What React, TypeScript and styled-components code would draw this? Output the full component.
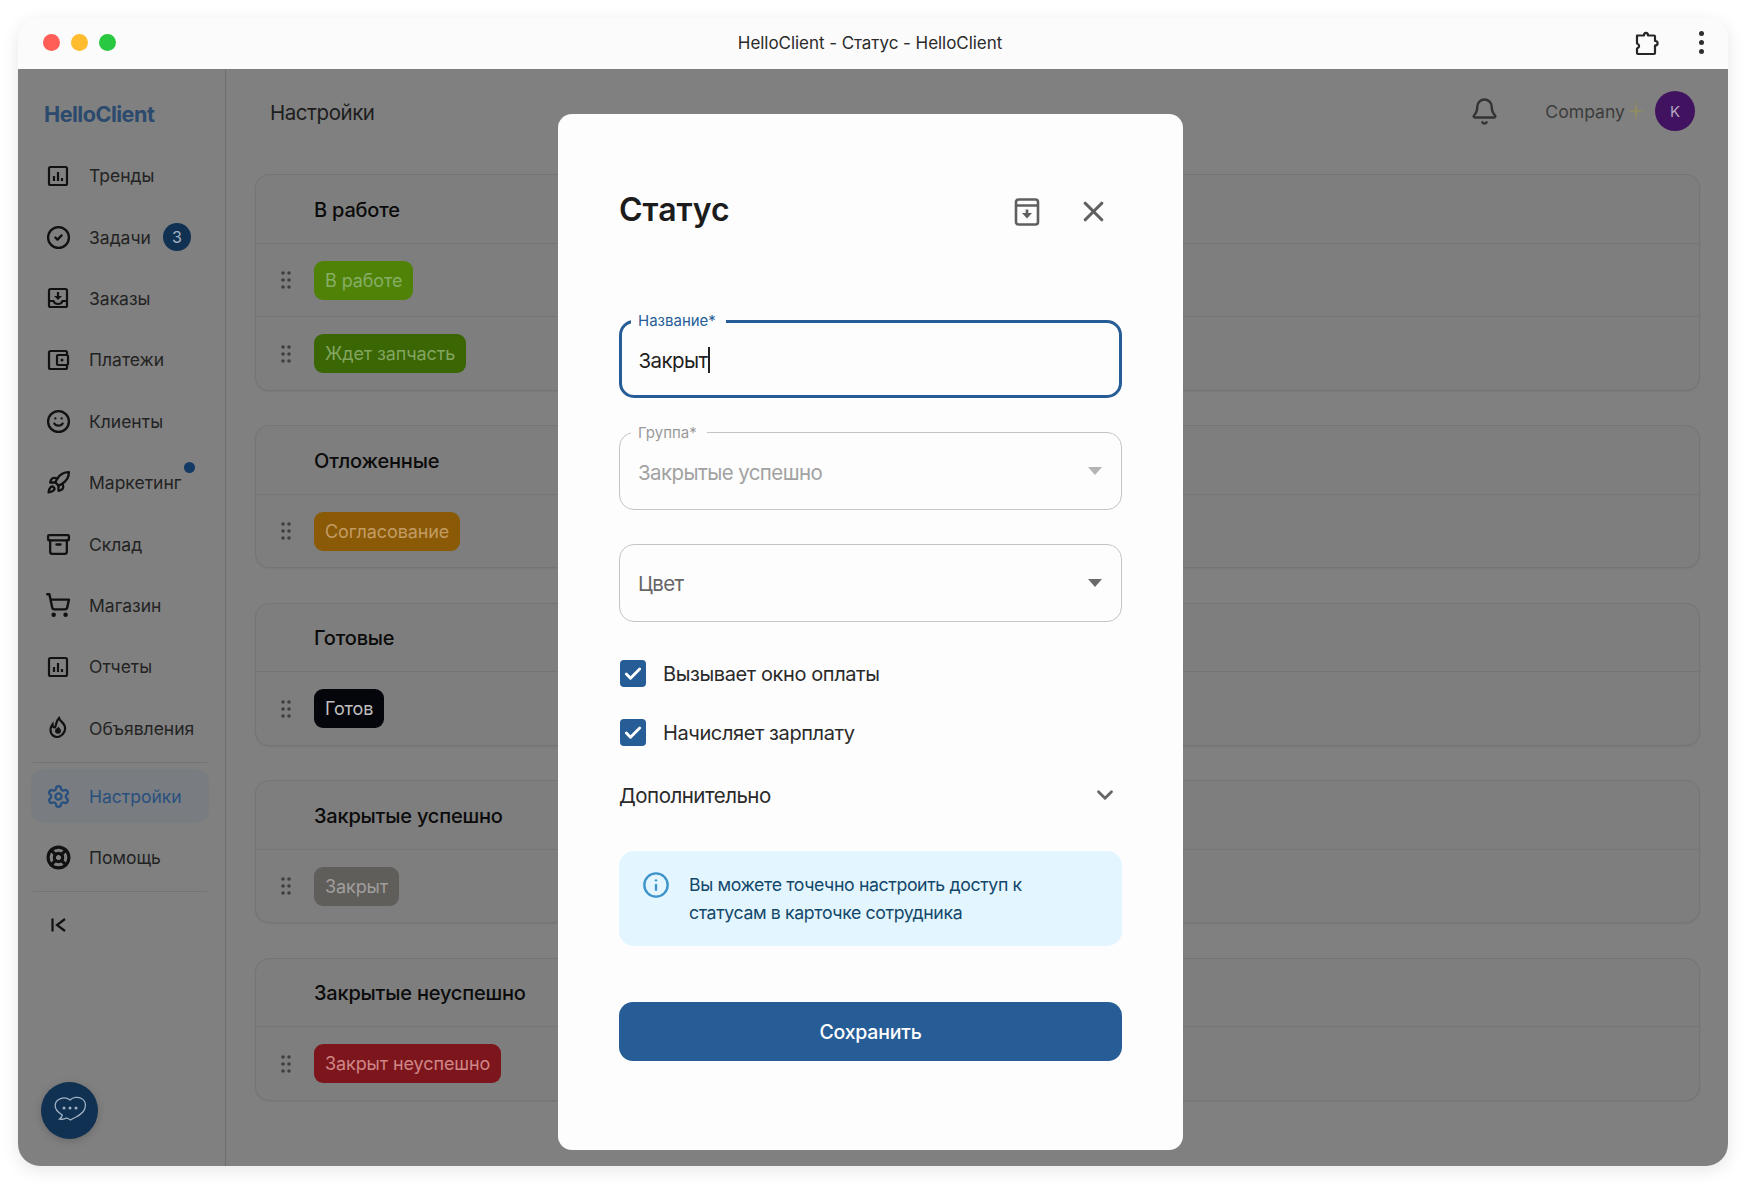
import React from 'react';
import styled, { createGlobalStyle } from 'styled-components';
import {
  Archive,
  Bell,
  Check,
  ChevronDown,
  CircleCheck,
  Info,
  LifeBuoy,
  Rocket,
  Settings,
  ShoppingCart,
  Smile,
  X,
} from 'lucide-react';

const GlobalStyle = createGlobalStyle`
  html, body {
    margin: 0;
    background: #ffffff;
    font-family: Inter, "Noto Sans", sans-serif;
  }
  * { box-sizing: border-box; }
`;

const Page = styled.div`
  width: 1750px;
  height: 1188px;
  padding: 18px 22px 22px 18px;
  overflow: hidden;
`;

const Window = styled.div`
  height: 100%;
  display: flex;
  flex-direction: column;
  border-radius: 22px;
  overflow: hidden;
  box-shadow: 0 4px 18px rgba(0, 0, 0, 0.1);
`;

const TitleBar = styled.div`
  height: 51px;
  flex: none;
  display: grid;
  grid-template-columns: 1fr auto 1fr;
  align-items: center;
  padding: 0 24px 2px 25px;
  background: #fbfbfb;
`;

const Lights = styled.div`
  display: flex;
  gap: 11px;
`;

const Light = styled.span<{ $color: string }>`
  width: 17px;
  height: 17px;
  border-radius: 50%;
  background: ${(p) => p.$color};
`;

const WindowTitle = styled.div`
  margin-right: 7px;
  font-size: 17px;
  color: #2a2a2a;
  letter-spacing: -0.05px;
`;

const WindowActions = styled.div`
  display: flex;
  justify-content: flex-end;
  align-items: center;
  gap: 40px;
`;

const KebabDots = styled.div`
  display: flex;
  flex-direction: column;
  gap: 4px;
  span {
    width: 5px;
    height: 5px;
    border-radius: 50%;
    background: #2f2f2f;
  }
`;

const Body = styled.div`
  flex: 1;
  display: flex;
  position: relative;
  background: #808080;
  min-height: 0;
`;

const Sidebar = styled.aside`
  width: 208px;
  flex: none;
  position: relative;
  border-right: 1px solid #6e6e6e;
  padding: 0 16px 0 13px;
`;

const Logo = styled.div`
  height: 76px;
  display: flex;
  align-items: center;
  padding: 14px 0 0 13px;
  font-size: 21.6px;
  font-weight: 700;
  letter-spacing: -0.5px;
  color: #2c4a6e;
`;

const NavItem = styled.div<{ $active?: boolean }>`
  height: ${(p) => (p.$active ? '54px' : '61.4px')};
  margin-bottom: ${(p) => (p.$active ? '3px' : '0')};
  display: flex;
  align-items: center;
  gap: 18px;
  padding-left: 14px;
  position: relative;
  font-size: 17.5px;
  color: ${(p) => (p.$active ? '#28507f' : '#232323')};
  background: ${(p) => (p.$active ? '#797c80' : 'transparent')};
  border-radius: ${(p) => (p.$active ? '14px' : '0')};
`;

const NavIcon = styled.span<{ $active?: boolean }>`
  width: 26px;
  flex: none;
  display: flex;
  justify-content: center;
  color: ${(p) => (p.$active ? '#28507f' : '#111111')};
`;

const CountBadge = styled.span`
  width: 28px;
  height: 28px;
  margin-left: -6px;
  border-radius: 50%;
  display: flex;
  align-items: center;
  justify-content: center;
  font-size: 16px;
  background: #103152;
  color: #a8b4c4;
`;

const NewDot = styled.span`
  position: absolute;
  top: 10px;
  left: 153px;
  width: 11px;
  height: 11px;
  border-radius: 50%;
  background: #123a64;
`;

const SideDivider = styled.div<{ $after?: boolean }>`
  height: 1px;
  margin: 3px 2px ${(p) => (p.$after ? '3px' : '6.5px')} 2px;
  background: #737373;
`;

const CollapseRow = styled.div`
  height: 60px;
  display: flex;
  align-items: center;
  padding-left: 19px;
  color: #111111;
`;

const ChatButton = styled.div`
  position: absolute;
  left: 23px;
  bottom: 27px;
  width: 57px;
  height: 57px;
  border-radius: 50%;
  display: flex;
  align-items: center;
  justify-content: center;
  background: #103152;
  box-shadow: 0 2px 8px rgba(0, 0, 0, 0.18);
`;

const Main = styled.main`
  flex: 1;
  min-width: 0;
  padding: 0 28px 0 29px;
`;

const Header = styled.header`
  height: 105px;
  display: flex;
  align-items: flex-start;
  justify-content: space-between;
  padding: 22px 5px 0 15px;
`;

const PageTitle = styled.h1`
  margin: 0;
  padding-top: 8.5px;
  font-size: 20.5px;
  font-weight: 400;
  letter-spacing: -0.45px;
  color: #1d1d1d;
`;

const HeaderRight = styled.div`
  display: flex;
  align-items: center;
  color: #333333;
`;

const CompanyName = styled.span`
  margin-left: 46px;
  font-size: 17.6px;
  color: #3c3c3c;
`;

const Avatar = styled.span`
  width: 40px;
  height: 40px;
  margin-left: 8px;
  border-radius: 50%;
  display: flex;
  align-items: center;
  justify-content: center;
  font-size: 15px;
  background: #40125f;
  color: #b5a5c2;
`;

const GroupList = styled.div`
  display: flex;
  flex-direction: column;
  gap: 34.5px;
`;

const Group = styled.section`
  border: 1px solid #757575;
  border-radius: 14px;
  background: #7e7e7e;
  box-shadow: 0 1px 2px rgba(0, 0, 0, 0.06);
`;

const GroupTitle = styled.h2`
  margin: 0;
  height: 67.5px;
  display: flex;
  align-items: center;
  padding: 2px 0 0 58px;
  font-size: 20px;
  font-weight: 500;
  color: #0b0b0b;
  letter-spacing: -0.2px;
`;

const StatusRow = styled.div`
  height: 73.5px;
  display: flex;
  align-items: center;
  gap: 23px;
  padding: 1px 0 0 25px;
  border-top: 1px solid #757575;
`;

const Chip = styled.span<{ $bg: string; $fg: string }>`
  height: 39px;
  display: inline-flex;
  align-items: center;
  padding: 0 11px;
  border-radius: 9px;
  font-size: 18px;
  letter-spacing: -0.1px;
  background: ${(p) => p.$bg};
  color: ${(p) => p.$fg};
`;

const Backdrop = styled.div`
  position: absolute;
  inset: 0;
  display: flex;
  justify-content: center;
  align-items: flex-start;
  padding: 45px 5px 0 0;
`;

const Modal = styled.div`
  width: 625px;
  height: 1036px;
  padding: 0 61px 0 61px;
  border-radius: 14px;
  background: #fdfdfd;
`;

const ModalHeader = styled.div`
  height: 206px;
  display: flex;
  align-items: flex-start;
  padding-top: 75px;
  color: #5f5f5f;
`;

const ModalTitle = styled.h2`
  margin: 0;
  flex: 1;
  font-size: 32px;
  line-height: 42px;
  font-weight: 600;
  color: #1c1c1c;
`;

const HeaderIcons = styled.div`
  display: flex;
  align-items: center;
  gap: 36px;
  padding: 6px 12px 0 0;
`;

const Fields = styled.div`
  display: flex;
  flex-direction: column;
  gap: 34px;
`;

const Field = styled.div<{ $focused?: boolean }>`
  height: 78px;
  position: relative;
  display: flex;
  align-items: center;
  justify-content: space-between;
  padding: 0 19px 0 ${(p) => (p.$focused ? '16.5px' : '18px')};
  border: ${(p) => (p.$focused ? '3px solid #275d96' : '1.5px solid #c4c4c4')};
  border-radius: 15px;
`;

const FieldLabel = styled.span<{ $focused?: boolean }>`
  position: absolute;
  top: ${(p) => (p.$focused ? '-12px' : '-10.5px')};
  left: ${(p) => (p.$focused ? '9px' : '11px')};
  padding: 0 10px 0 7px;
  font-size: 15px;
  line-height: 20px;
  background: #fdfdfd;
  color: ${(p) => (p.$focused ? '#275d96' : '#9a9a9a')};
`;

const FieldValue = styled.span<{ $tone: string; $nudge?: boolean }>`
  padding-top: ${(p) => (p.$nudge ? '2px' : '0')};
  font-size: 20.5px;
  color: ${(p) => p.$tone};
  letter-spacing: -0.6px;
`;

const Caret = styled.span`
  display: inline-block;
  width: 1.5px;
  height: 26px;
  margin-left: 1px;
  vertical-align: -5px;
  background: #222222;
`;

const SelectArrow = styled.span<{ $tone: string }>`
  width: 0;
  height: 0;
  border-left: 7px solid transparent;
  border-right: 7px solid transparent;
  border-top: 8px solid ${(p) => p.$tone};
`;

const CheckRows = styled.div`
  margin-top: 38px;
  display: flex;
  flex-direction: column;
  gap: 32px;
`;

const CheckRow = styled.label`
  display: flex;
  align-items: center;
  gap: 17px;
  height: 27px;
  padding-left: 1px;
  font-size: 20px;
  color: #2a2a2a;
  letter-spacing: -0.4px;
`;

const CheckBox = styled.span`
  width: 26px;
  height: 27px;
  border-radius: 4px;
  display: flex;
  align-items: center;
  justify-content: center;
  background: #275d96;
  color: #ffffff;
`;

const MoreRow = styled.div`
  margin-top: 34px;
  height: 30px;
  display: flex;
  align-items: center;
  justify-content: space-between;
  padding-right: 4px;
  font-size: 20.5px;
  color: #2a2a2a;
  letter-spacing: -0.5px;
`;

const Notice = styled.div`
  margin-top: 41px;
  height: 95px;
  display: flex;
  gap: 19px;
  padding: 20px 24px 0 23px;
  border-radius: 15px;
  background: #e3f5fe;
  color: #12476a;
  font-size: 17.7px;
  line-height: 28px;
  letter-spacing: -0.37px;
  svg {
    flex: none;
    color: #3a93cb;
  }
`;

const SaveButton = styled.button`
  width: 100%;
  height: 59px;
  margin-top: 56px;
  border: 0;
  border-radius: 14px;
  background: #275d96;
  color: #ffffff;
  font-family: inherit;
  font-size: 19.5px;
  font-weight: 500;
  letter-spacing: -0.2px;
`;

type IconProps = { size?: number };

const ChartIcon = ({ size = 24 }: IconProps) => (
  <svg width={size} height={size} viewBox="0 0 24 24" fill="none" stroke="currentColor" strokeWidth="2.2">
    <rect x="3" y="3" width="18" height="18" rx="1.5" />
    <path d="M8 17v-5M12 17V8M16 17v-3" />
  </svg>
);

const InboxIcon = ({ size = 24 }: IconProps) => (
  <svg width={size} height={size} viewBox="0 0 24 24" fill="none" stroke="currentColor" strokeWidth="2.2">
    <rect x="3" y="3" width="18" height="18" rx="1.5" />
    <path d="M3 15h4.5c.6 2 2.4 3 4.5 3s3.9-1 4.5-3H21" />
    <path d="M12 6v6" />
    <path d="M8 10h8l-4 4z" fill="currentColor" stroke="none" />
  </svg>
);

const WalletIcon = ({ size = 24 }: IconProps) => (
  <svg width={size} height={size} viewBox="0 0 24 24" fill="none" stroke="currentColor" strokeWidth="2.2">
    <path d="M21 6V4.500A1.500 1.500 0 0 0 19.500 3h-15A1.500 1.500 0 0 0 3 4.500v15A1.500 1.500 0 0 0 4.500 21h15a1.500 1.500 0 0 0 1.500-1.500V18" />
    <rect x="11" y="7" width="11" height="10" rx="1" />
    <circle cx="16" cy="12" r="1.500" fill="currentColor" stroke="none" />
  </svg>
);

const FlameIcon = ({ size = 24 }: IconProps) => (
  <svg width={size} height={size} viewBox="0 0 24 24" fill="none" stroke="currentColor" strokeWidth="2.2">
    <path d="M13 2c.8 3 4 4 5.500 7.500 1.600 4-.3 9-5 11-4.500 1.700-9-1.500-9-6.500 0-2.200.9-4 2-5.500 0 2 1 3 2.500 3C10.500 8.500 10 5 13 2z" />
    <path d="M12.500 10.500c.3 1.500 2.500 2.200 2.500 4.300a3 3 0 0 1-6 0c0-2 2.500-2.500 3.500-4.300z" fill="currentColor" stroke="none" />
  </svg>
);

const CollapseIcon = () => (
  <svg width="18" height="18" viewBox="0 0 18 18" fill="none" stroke="currentColor" strokeWidth="2.2">
    <path d="M2.500 2.500v13M15 3L7 9l8 6" />
  </svg>
);

const PuzzleIcon = () => (
  <svg width="26" height="26" viewBox="0 0 26 26" fill="none" stroke="#262626" strokeWidth="2.2" strokeLinejoin="round">
    <path d="M4 5.500h7c0-3.500 4-3.500 4 0h6c.6 0 1 .4 1 1V11c3.500 0 3.500 4.500 0 4.500V23c0 .6-.4 1-1 1H5c-.6 0-1-.4-1-1v-4.500c2.800-1 2.800-4 0-5z" />
  </svg>
);

const ArchiveDownIcon = () => (
  <svg width="28" height="28" viewBox="0 0 28 28" fill="none" stroke="currentColor" strokeWidth="2.6">
    <rect x="3" y="1.500" width="22" height="25" rx="2.500" />
    <path d="M3 7.500h22" />
    <path d="M14 11.500v5" />
    <path d="M9 15h10l-5 5.500z" fill="currentColor" stroke="none" />
  </svg>
);

const ChatIcon = () => (
  <svg width="36" height="34" viewBox="0 0 36 34" fill="none" stroke="#9fb0c4" strokeWidth="1.3">
    <path d="M18 6c3-3 8-3.500 11.500-1.500 3.500 2 4.500 6 3.500 9.500-1.200 4.500-5 7-9 9-2 1-4 2-5.500 3-1.500-1-2.500-1.500-4-2-1.500 1-4.500 1.500-7 1 1.500-1 2.500-2.500 2.800-4C6 18.500 3 15 3.200 11 3.500 5 12.500 1.500 18 6z" />
    <circle cx="12" cy="14" r="1.500" fill="#9fb0c4" stroke="none" />
    <circle cx="18" cy="14" r="1.500" fill="#9fb0c4" stroke="none" />
    <circle cx="24" cy="14" r="1.500" fill="#9fb0c4" stroke="none" />
  </svg>
);

const GripIcon = () => (
  <svg width="10" height="18" viewBox="0 0 10 18" fill="#3f3f3f">
    {[2, 9, 16].flatMap((y) => [2, 8].map((x) => <circle key={`${x}-${y}`} cx={x} cy={y} r="1.8" />))}
  </svg>
);

const SparkIcon = () => (
  <svg width="22" height="26" viewBox="0 0 20 26" fill="#8f8c62">
    <path d="M10 2l1.200 9.800 8 1.200-8 1.200L10 24l-1.200-9.800-8-1.200 8-1.200z" />
  </svg>
);

const topNav = [
  { label: 'Тренды', icon: <ChartIcon /> },
  { label: 'Задачи', icon: <CircleCheck size={25} strokeWidth={2.2} />, count: 3 },
  { label: 'Заказы', icon: <InboxIcon /> },
  { label: 'Платежи', icon: <WalletIcon /> },
  { label: 'Клиенты', icon: <Smile size={25} strokeWidth={2.2} /> },
  { label: 'Маркетинг', icon: <Rocket size={25} strokeWidth={2.2} />, dot: true },
  { label: 'Склад', icon: <Archive size={25} strokeWidth={2.2} /> },
  { label: 'Магазин', icon: <ShoppingCart size={26} strokeWidth={2.2} /> },
  { label: 'Отчеты', icon: <ChartIcon /> },
  { label: 'Объявления', icon: <FlameIcon /> },
];

const groups = [
  {
    title: 'В работе',
    chips: [
      { text: 'В работе', bg: '#4f8206', fg: '#86ae66' },
      { text: 'Ждет запчасть', bg: '#3a6603', fg: '#82a560' },
    ],
  },
  { title: 'Отложенные', chips: [{ text: 'Согласование', bg: '#8a5a06', fg: '#c39c64' }] },
  { title: 'Готовые', chips: [{ text: 'Готов', bg: '#05050c', fg: '#c0c0c0' }] },
  { title: 'Закрытые успешно', chips: [{ text: 'Закрыт', bg: '#605e5b', fg: '#a09e9c' }] },
  { title: 'Закрытые неуспешно', chips: [{ text: 'Закрыт неуспешно', bg: '#7d161c', fg: '#cf8686' }] },
];

const App: React.FC = () => {
  return (
    <Page>
      <GlobalStyle />
      <Window>
        <TitleBar>
          <Lights>
            <Light $color="#ff5f57" />
            <Light $color="#febc2e" />
            <Light $color="#28c840" />
          </Lights>
          <WindowTitle>HelloClient - Статус - HelloClient</WindowTitle>
          <WindowActions>
            <PuzzleIcon />
            <KebabDots>
              <span />
              <span />
              <span />
            </KebabDots>
          </WindowActions>
        </TitleBar>

        <Body>
          <Sidebar>
            <Logo>HelloClient</Logo>
            {topNav.map((item) => (
              <NavItem key={item.label}>
                <NavIcon>{item.icon}</NavIcon>
                {item.label}
                {item.count && <CountBadge>{item.count}</CountBadge>}
                {item.dot && <NewDot />}
              </NavItem>
            ))}
            <SideDivider />
            <NavItem $active>
              <NavIcon $active>
                <Settings size={25} strokeWidth={2.2} />
              </NavIcon>
              Настройки
            </NavItem>
            <NavItem>
              <NavIcon>
                <LifeBuoy size={25} strokeWidth={3} />
              </NavIcon>
              Помощь
            </NavItem>
            <SideDivider $after />
            <CollapseRow>
              <CollapseIcon />
            </CollapseRow>
            <ChatButton>
              <ChatIcon />
            </ChatButton>
          </Sidebar>

          <Main>
            <Header>
              <PageTitle>Настройки</PageTitle>
              <HeaderRight>
                <Bell size={29} strokeWidth={2} />
                <CompanyName>Company</CompanyName>
                <SparkIcon />
                <Avatar>K</Avatar>
              </HeaderRight>
            </Header>
            <GroupList>
              {groups.map((group) => (
                <Group key={group.title}>
                  <GroupTitle>{group.title}</GroupTitle>
                  {group.chips.map((chip) => (
                    <StatusRow key={chip.text}>
                      <GripIcon />
                      <Chip $bg={chip.bg} $fg={chip.fg}>
                        {chip.text}
                      </Chip>
                    </StatusRow>
                  ))}
                </Group>
              ))}
            </GroupList>
          </Main>

          <Backdrop>
            <Modal>
              <ModalHeader>
                <ModalTitle>Статус</ModalTitle>
                <HeaderIcons>
                  <ArchiveDownIcon />
                  <X size={33} strokeWidth={2.3} />
                </HeaderIcons>
              </ModalHeader>

              <Fields>
                <Field $focused>
                  <FieldLabel $focused>Название*</FieldLabel>
                  <FieldValue $tone="#1f1f1f" $nudge>
                    Закрыт
                    <Caret />
                  </FieldValue>
                </Field>
                <Field>
                  <FieldLabel>Группа*</FieldLabel>
                  <FieldValue $tone="#a2a2a2" $nudge>
                    Закрытые успешно
                  </FieldValue>
                  <SelectArrow $tone="#b4b4b4" />
                </Field>
                <Field>
                  <FieldValue $tone="#666666">Цвет</FieldValue>
                  <SelectArrow $tone="#6a6a6a" />
                </Field>
              </Fields>

              <CheckRows>
                <CheckRow>
                  <CheckBox>
                    <Check size={20} strokeWidth={3.4} />
                  </CheckBox>
                  Вызывает окно оплаты
                </CheckRow>
                <CheckRow>
                  <CheckBox>
                    <Check size={20} strokeWidth={3.4} />
                  </CheckBox>
                  Начисляет зарплату
                </CheckRow>
              </CheckRows>

              <MoreRow>
                Дополнительно
                <ChevronDown size={26} strokeWidth={2.6} color="#666666" />
              </MoreRow>

              <Notice>
                <Info size={28} strokeWidth={2} />
                <span>
                  Вы можете точечно настроить доступ к
                  <br />
                  статусам в карточке сотрудника
                </span>
              </Notice>

              <SaveButton>Сохранить</SaveButton>
            </Modal>
          </Backdrop>
        </Body>
      </Window>
    </Page>
  );
};

export default App;
